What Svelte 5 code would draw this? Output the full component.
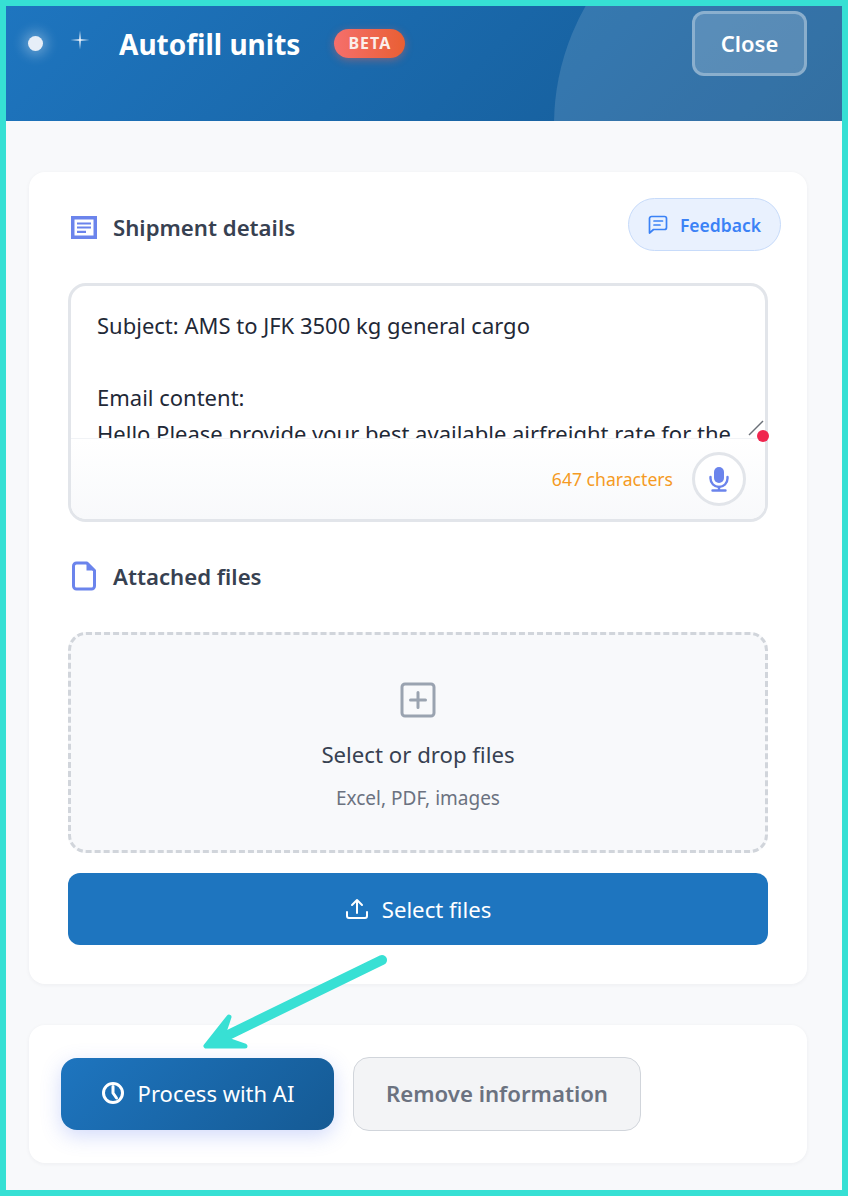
<script lang="ts">
  const message =
    'Subject: AMS to JFK 3500 kg general cargo\n\nEmail content:\nHello Please provide your best available airfreight rate for the';
</script>

<div class="frame">
  <header class="top">
    <div class="moon"></div>
    <div class="brand">
      <span class="dot"></span>
      <svg class="sparkle" width="20" height="20" viewBox="0 0 20 20">
        <path d="M10 0.5 L10.8 9.2 L19.5 10 L10.8 10.8 L10 19.5 L9.2 10.8 L0.5 10 L9.2 9.2 Z" fill="#f2f6fc" />
      </svg>
      <h1>Autofill units</h1>
      <span class="beta">BETA</span>
    </div>
    <button class="close">Close</button>
  </header>

  <main class="body">
    <section class="card details">
      <div class="head first">
        <svg width="26" height="23" viewBox="0 0 26 23">
          <rect x="0" y="0" width="26" height="23" fill="#6b84ec" />
          <rect x="3.5" y="3.5" width="19" height="16" fill="#fff" />
          <path d="M6 7.5h14M6 11.5h14M6 15.8h9" stroke="#6b84ec" stroke-width="2.2" fill="none" />
        </svg>
        <h2>Shipment details</h2>
        <button class="feedback">
          <svg width="20" height="20" viewBox="0 0 20 20" fill="none" stroke="#3b82f6" stroke-width="1.7" stroke-linejoin="round" stroke-linecap="round">
            <path d="M1.5 18 V3.5 a2 2 0 0 1 2-2 h13 a2 2 0 0 1 2 2 v9 a2 2 0 0 1-2 2 H5.5 Z" />
            <path d="M6 6h8.5M6 10h6" />
          </svg>
          Feedback
        </button>
      </div>

      <div class="editor">
        <textarea readonly value={message}></textarea>
        <svg class="grip" width="18" height="18" viewBox="0 0 18 18">
          <path d="M1 15 L15 1" stroke="#6b7078" stroke-width="1.4" />
        </svg>
        <span class="rec"></span>
        <div class="foot">
          <span class="count">647 characters</span>
          <button class="mic" aria-label="Dictate">
            <svg width="22" height="26" viewBox="0 0 22 26" fill="#6b84ec">
              <rect x="6" y="1" width="10" height="16" rx="5" />
              <path d="M2.5 11 v1.5 a8.5 8.5 0 0 0 17 0 V11" fill="none" stroke="#6b84ec" stroke-width="2.4" stroke-linecap="round" />
              <path d="M11 21 v3.5 M4.5 24.5 h13" stroke="#6b84ec" stroke-width="2.4" stroke-linecap="round" />
            </svg>
          </button>
        </div>
      </div>

      <div class="head files">
        <svg width="26" height="30" viewBox="0 0 26 30" fill="none">
          <path d="M5.5 2 H16 L23.5 9.5 V25 a3 3 0 0 1-3 3 H5.5 a3 3 0 0 1-3-3 V5 a3 3 0 0 1 3-3 Z" stroke="#6b84ec" stroke-width="3" stroke-linejoin="round" />
          <path d="M15.5 2 L23.5 9.5 H15.5 Z" fill="#6b84ec" />
        </svg>
        <h2>Attached files</h2>
      </div>

      <div class="drop">
        <svg width="36" height="36" viewBox="0 0 36 36" fill="none" stroke="#9aa3b0" stroke-width="3" stroke-linecap="round">
          <rect x="2" y="2" width="32" height="32" rx="3" />
          <path d="M18 10.5v15M10.5 18h15" />
        </svg>
        <p class="drop-title">Select or drop files</p>
        <p class="drop-sub">Excel, PDF, images</p>
      </div>

      <button class="select">
        <svg width="24" height="24" viewBox="0 0 24 24" fill="none" stroke="#fff" stroke-width="2" stroke-linecap="round" stroke-linejoin="round">
          <path d="M12 16 V3.5 M7 8 L12 3 L17 8" />
          <path d="M2 15 v4 a2 2 0 0 0 2 2 h16 a2 2 0 0 0 2-2 v-4" />
        </svg>
        Select files
      </button>
    </section>

    <section class="card actions">
      <button class="process">
        <svg width="24" height="24" viewBox="0 0 24 24" fill="none" stroke="#fff" stroke-width="3" stroke-linecap="round" stroke-linejoin="round">
          <circle cx="12" cy="12" r="9.5" />
          <path d="M12 5.5 V12 L15.5 17" />
        </svg>
        Process with AI
      </button>
      <button class="remove">Remove information</button>
    </section>
  </main>

  <svg class="arrow" width="848" height="1196" viewBox="0 0 848 1196" fill="none" stroke="#38e0d4" stroke-linecap="round" stroke-linejoin="round">
    <path d="M382 960 L222 1038" stroke-width="10" />
    <path d="M229 1017 L206 1046 L245 1046 L222 1038 Z" stroke-width="5" fill="#38e0d4" />
  </svg>
</div>

<style>
  :global(body) {
    margin: 0;
    font-family: 'Noto Sans', sans-serif;
  }
  button {
    font-family: inherit;
    cursor: pointer;
  }
  h1,
  h2,
  p {
    margin: 0;
  }

  .frame {
    position: relative;
    box-sizing: border-box;
    width: 848px;
    height: 1196px;
    border: 6px solid #36e0d4;
    background: #f8f9fb;
    overflow: hidden;
  }

  /* Header */
  .top {
    position: relative;
    height: 115px;
    box-sizing: border-box;
    padding: 5px 35px 0 0;
    display: flex;
    align-items: flex-start;
    justify-content: space-between;
    overflow: hidden;
    background: linear-gradient(135deg, #1e75bf, #155a94);
  }
  .moon {
    position: absolute;
    left: 548px;
    top: -121px;
    width: 480px;
    height: 480px;
    border-radius: 50%;
    background: rgba(255, 255, 255, 0.13);
  }
  .brand {
    position: relative;
    display: flex;
    align-items: center;
    height: 65px;
    padding-left: 22px;
  }
  .dot {
    width: 15px;
    height: 15px;
    border-radius: 50%;
    background: #e6eef8;
    box-shadow: 0 0 12px 5px rgba(255, 255, 255, 0.28);
  }
  .sparkle {
    margin: -7px 0 0 27px;
  }
  h1 {
    margin-left: 29px;
    font-size: 28px;
    font-weight: 700;
    color: #fff;
    line-height: 36px;
  }
  .beta {
    margin: -1px 0 0 34px;
    width: 71px;
    height: 29px;
    border-radius: 15px;
    display: flex;
    align-items: center;
    justify-content: center;
    font-size: 16px;
    font-weight: 700;
    letter-spacing: 1px;
    color: #fbeee9;
    background: linear-gradient(90deg, #f56f6c, #e95f33);
    box-shadow: 0 2px 8px rgba(240, 100, 80, 0.45);
  }
  .close {
    position: relative;
    width: 115px;
    height: 65px;
    padding: 0 0 2px;
    border: 3px solid rgba(255, 255, 255, 0.3);
    border-radius: 12px;
    background: rgba(255, 255, 255, 0.18);
    color: #fff;
    font-size: 22px;
    font-weight: 600;
  }

  /* Cards */
  .body {
    padding: 51px 35px 0 23px;
    display: flex;
    flex-direction: column;
    gap: 41px;
  }
  .card {
    background: #fff;
    border-radius: 16px;
    box-shadow: 0 1px 4px rgba(30, 40, 60, 0.05);
  }
  .details {
    height: 812px;
    box-sizing: border-box;
    padding: 26px 39px 0;
  }
  .head {
    position: relative;
    height: 53px;
    box-sizing: border-box;
    display: flex;
    align-items: center;
    gap: 15px;
    padding-left: 3px;
  }
  .head.first {
    gap: 16px;
    padding-top: 5px;
  }
  h2 {
    font-size: 22.2px;
    font-weight: 600;
    color: #374151;
  }
  .feedback {
    position: absolute;
    right: -13px;
    top: 0;
    width: 153px;
    height: 53px;
    padding: 0;
    border: 1px solid #c7dbfa;
    border-radius: 27px;
    background: #e9f1fe;
    color: #3b82f6;
    font-size: 17.5px;
    font-weight: 600;
    display: flex;
    align-items: center;
    justify-content: center;
    gap: 12px;
  }

  /* Editor */
  .editor {
    position: relative;
    margin-top: 32px;
    height: 239px;
    box-sizing: border-box;
    border: 3px solid #e2e5ea;
    border-radius: 18px;
    background: #fff;
  }
  textarea {
    display: block;
    width: 100%;
    height: 152px;
    box-sizing: border-box;
    padding: 21px 26px 0;
    border: 0;
    border-radius: 15px 15px 0 0;
    outline: 0;
    resize: none;
    overflow: hidden;
    font-family: inherit;
    font-size: 22px;
    line-height: 36px;
    color: #1f2937;
    background: transparent;
  }
  .grip {
    position: absolute;
    right: -1px;
    top: 134px;
  }
  .rec {
    position: absolute;
    right: -4px;
    top: 144px;
    width: 12px;
    height: 12px;
    border-radius: 50%;
    background: #f0264f;
  }
  .foot {
    height: 81px;
    box-sizing: border-box;
    border-top: 1px solid #f1f3f6;
    border-radius: 0 0 15px 15px;
    padding: 13px 19px 0 0;
    display: flex;
    align-items: flex-start;
    justify-content: flex-end;
    gap: 19px;
    background: linear-gradient(#fff, #f8f9fb);
  }
  .count {
    margin-top: 14px;
    font-size: 17.6px;
    line-height: 26px;
    color: #f59a23;
  }
  .mic {
    width: 54px;
    height: 54px;
    padding: 0;
    border: 3px solid #e2e5ea;
    border-radius: 50%;
    background: #fff;
    display: flex;
    align-items: center;
    justify-content: center;
  }

  /* Attachments */
  .files {
    margin-top: 28px;
    height: 52px;
  }
  .files svg {
    margin-right: 1px;
  }
  .drop {
    margin-top: 30px;
    height: 221px;
    box-sizing: border-box;
    border: 3px dashed #d1d5db;
    border-radius: 18px;
    background: #f8f9fb;
    display: flex;
    flex-direction: column;
    align-items: center;
    padding-top: 47px;
    text-align: center;
  }
  .drop-title {
    margin-top: 21px;
    font-size: 22.2px;
    line-height: 32px;
    color: #374151;
  }
  .drop-sub {
    margin-top: 14px;
    font-size: 19px;
    line-height: 26px;
    color: #6b7280;
  }
  .select {
    margin-top: 20px;
    width: 100%;
    height: 72px;
    padding: 0;
    border: 0;
    border-radius: 12px;
    background: #1e75bf;
    color: #fff;
    font-size: 22.2px;
    display: flex;
    align-items: center;
    justify-content: center;
    gap: 13px;
  }

  /* Action bar */
  .actions {
    height: 138px;
    box-sizing: border-box;
    padding: 32px 32px 0;
    display: flex;
    align-items: flex-start;
    gap: 19px;
  }
  .process {
    width: 273px;
    height: 72px;
    margin-top: 1px;
    padding: 0 0 2px;
    border: 0;
    border-radius: 16px;
    background: linear-gradient(135deg, #1e75bf, #155a94);
    box-shadow: 0 6px 20px rgba(80, 110, 240, 0.25);
    color: #fff;
    font-size: 22px;
    display: flex;
    align-items: center;
    justify-content: center;
    gap: 13px;
  }
  .remove {
    width: 288px;
    height: 74px;
    padding: 0 0 2px;
    border: 1px solid #d1d5db;
    border-radius: 16px;
    background: #f3f4f6;
    color: #6b7280;
    font-size: 22.2px;
    font-weight: 600;
  }

  .arrow {
    position: absolute;
    left: -6px;
    top: -6px;
    pointer-events: none;
  }
</style>
